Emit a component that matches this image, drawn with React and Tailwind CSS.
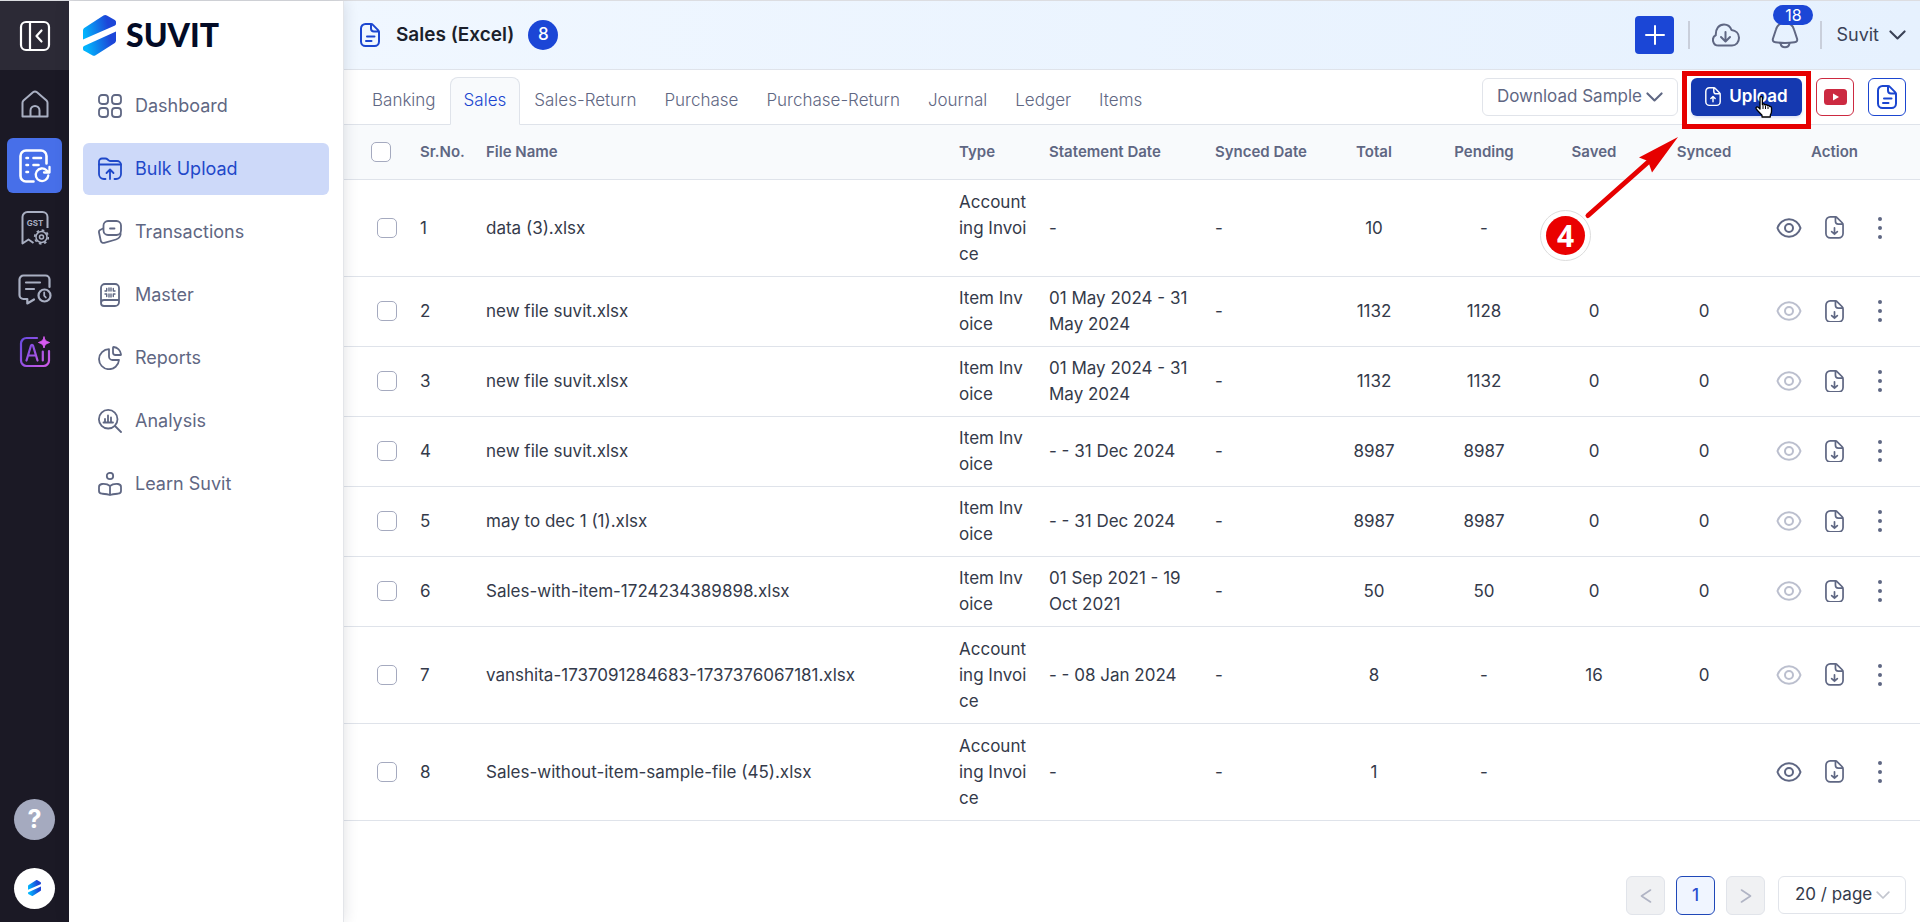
import clsx from "clsx";

const navItems = [
  { label: "Dashboard", icon: DashboardIcon },
  { label: "Bulk Upload", icon: FolderUpIcon, active: true },
  { label: "Transactions", icon: TransactionsIcon },
  { label: "Master", icon: MasterIcon },
  { label: "Reports", icon: ReportsIcon },
  { label: "Analysis", icon: AnalysisIcon },
  { label: "Learn Suvit", icon: LearnIcon },
];

const railItems = [
  { label: "Home", icon: HomeIcon },
  { label: "Data entry", icon: EntryIcon, active: true },
  { label: "GST", icon: GstIcon },
  { label: "Requests", icon: RequestIcon },
  { label: "AI", icon: AiIcon },
];

const tabs = ["Banking", "Sales", "Sales-Return", "Purchase", "Purchase-Return", "Journal", "Ledger", "Items"];

const rows = [
  { name: "data (3).xlsx", type: "Accounting Invoice", date: "-", total: 10, pending: "-", canView: true },
  { name: "new file suvit.xlsx", type: "Item Invoice", date: "01 May 2024 - 31 May 2024", total: 1132, pending: 1128, saved: 0, synced: 0 },
  { name: "new file suvit.xlsx", type: "Item Invoice", date: "01 May 2024 - 31 May 2024", total: 1132, pending: 1132, saved: 0, synced: 0 },
  { name: "new file suvit.xlsx", type: "Item Invoice", date: "- - 31 Dec 2024", total: 8987, pending: 8987, saved: 0, synced: 0 },
  { name: "may to dec 1 (1).xlsx", type: "Item Invoice", date: "- - 31 Dec 2024", total: 8987, pending: 8987, saved: 0, synced: 0 },
  { name: "Sales-with-item-1724234389898.xlsx", type: "Item Invoice", date: "01 Sep 2021 - 19 Oct 2021", total: 50, pending: 50, saved: 0, synced: 0 },
  { name: "vanshita-1737091284683-1737376067181.xlsx", type: "Accounting Invoice", date: "- - 08 Jan 2024", total: 8, pending: "-", saved: 16, synced: 0 },
  { name: "Sales-without-item-sample-file (45).xlsx", type: "Accounting Invoice", date: "-", total: 1, pending: "-", canView: true },
];

function Svg({ w, h, sw = 2, className, children }) {
  return (
    <svg
      width={w}
      height={h}
      viewBox={`0 0 ${w} ${h}`}
      fill="none"
      stroke="currentColor"
      strokeWidth={sw}
      strokeLinecap="round"
      strokeLinejoin="round"
      className={clsx("shrink-0", className)}
      aria-hidden="true"
    >
      {children}
    </svg>
  );
}

function DashboardIcon() {
  return (
    <Svg w={24} h={24} sw={1.8}>
      <rect x="1" y="1" width="9" height="9" rx="3" />
      <rect x="14" y="1" width="9" height="9" rx="3" />
      <rect x="1" y="14" width="9" height="9" rx="3" />
      <rect x="14" y="14" width="9" height="9" rx="3" />
    </Svg>
  );
}

function FolderUpIcon() {
  return (
    <Svg w={24} h={24} sw={1.8}>
      <path d="M7.5 22H6a5 5 0 0 1-5-5V4.5A3 3 0 0 1 4 1.5h3.2c1 0 1.9.4 2.5 1l.8.8c.6.4 1.2.7 2 .7H19a4 4 0 0 1 4 4v9a5 5 0 0 1-5 5h-1.5" />
      <path d="M1 7.5h22" />
      <path d="M12 22v-9M8.5 16l3.5-3.5 3.5 3.5" />
    </Svg>
  );
}

function TransactionsIcon() {
  return (
    <Svg w={24} h={24} sw={1.8}>
      <rect x="5.5" y="1" width="17.5" height="14" rx="4.5" />
      <path d="M12 8.5h4.500" />
      <path d="M5 8.5 2 10c-.8.5-1.2 1.5-1 2.5l1.7 8c.3 1.7 1.8 2.7 3.5 2.3L18 19.500c2.700-.8 4.300-2.500 4.700-5.500" />
    </Svg>
  );
}

function MasterIcon() {
  return (
    <Svg w={24} h={24} sw={1.8}>
      <path d="M3 20V5a4 4 0 0 1 4-4h10a4 4 0 0 1 4 4v14a4 4 0 0 1-4 4H6a3 3 0 0 1 0-6h15" />
      <path d="M11 5v3M13 5v3M11 11v3M13 11v3M7 8h1.7V5.5M17 8h-1.7V5.5M7 11h1.7v2.5M17 11h-1.7v2.5" strokeWidth="1.4" />
    </Svg>
  );
}

function ReportsIcon() {
  return (
    <Svg w={24} h={24} sw={1.8}>
      <path d="M11 3.200A10 10 0 1 0 21 14h-6.500a3.500 3.500 0 0 1-3.500-3.500z" />
      <path d="M15 1.8v4.700A2.500 2.500 0 0 0 17.500 9h5c.3 0 .5-.3.5-.6A8.500 8.500 0 0 0 15.600 1c-.3 0-.6.3-.6.8z" />
    </Svg>
  );
}

function AnalysisIcon() {
  return (
    <Svg w={24} h={24} sw={1.8}>
      <circle cx="10.2" cy="10.2" r="9.3" />
      <path d="m17 17 6 6" />
      <path d="M5.5 13.5H15M7 10v3M10 6.5V13M13 8.500V13" />
    </Svg>
  );
}

function LearnIcon() {
  return (
    <Svg w={24} h={24} sw={1.8}>
      <circle cx="12" cy="4" r="3.2" />
      <path d="M12 14c-2-1.700-5-2.300-8-2-1.800.2-3 1.200-3 3v4c0 1.800 1 2.600 3 2.700 3 .2 5.500.3 8 1.300 2.500-1 5-1.100 8-1.300 2-.1 3-.9 3-2.700v-4c0-1.800-1.200-2.800-3-3-3-.3-6 .3-8 2zM12 14v9" />
    </Svg>
  );
}

function HomeIcon() {
  return (
    <Svg w={28} h={28} sw={2}>
      <path d="M1.5 26.5V12.800c0-.9.4-1.700 1-2.300l9.500-8.200c1.200-1 2.800-1 4 0l9.500 8.200c.6.6 1 1.400 1 2.300v13.700z" />
      <path d="M9.5 26V20.500a4.500 4.500 0 0 1 9 0V26" />
    </Svg>
  );
}

function EntryIcon() {
  return (
    <Svg w={32} h={34} sw={2.6}>
      <path d="M14.5 32.5H7A5.500 5.500 0 0 1 1.500 27V7A5.500 5.500 0 0 1 7 1.500h15A5.500 5.500 0 0 1 27.500 7v7.500" />
      <path d="M7.5 9H9M14.500 9H22M7.500 16H9M14.500 16h5M7.500 23H9" />
      <path d="M29.300 26.500a6.300 6.300 0 1 1-1.800-5.200l2 2M30.500 18v5.500H25" strokeWidth="2.3" />
    </Svg>
  );
}

function GstIcon() {
  return (
    <svg width="28" height="34" viewBox="0 0 28 34" fill="none" stroke="currentColor" strokeWidth="2" strokeLinejoin="round" aria-hidden="true">
      <path d="M12.5 32l-5-3.500-6 4V6a5 5 0 0 1 5-5h15a5 5 0 0 1 5 5v11" />
      <text x="14" y="14.5" textAnchor="middle" fontFamily="Inter" fontSize="8" fontWeight="700" fill="currentColor" stroke="none">
        GST
      </text>
      <circle cx="20.5" cy="26" r="5.5" strokeWidth="1.5" />
      <circle cx="20.5" cy="26" r="6.8" strokeWidth="1.7" strokeDasharray="2.6 2.74" />
      <circle cx="20.5" cy="26" r="2" strokeWidth="1.5" />
    </svg>
  );
}

function RequestIcon() {
  return (
    <Svg w={34} h={32} sw={2.2}>
      <path d="M31.5 13V5.500a4 4 0 0 0-4-4h-22a4 4 0 0 0-4 4V21a4 4 0 0 0 4 4h3.800v4.500L16 25.500" />
      <path d="M8 8.5h14M8 15h8" />
      <circle cx="26.5" cy="21.5" r="6" />
      <path d="M26.2 18.500v3.200l1.600 1.800" strokeWidth="1.8" />
    </Svg>
  );
}

function AiIcon() {
  return (
    <svg width="32" height="32" viewBox="0 0 32 32" fill="none" strokeWidth="2.2" strokeLinecap="round" strokeLinejoin="round" aria-hidden="true">
      <defs>
        <linearGradient id="ai-stroke" gradientUnits="userSpaceOnUse" x1="1" y1="4" x2="31" y2="28">
          <stop stopColor="#6a4be0" />
          <stop offset="1" stopColor="#cf5be8" />
        </linearGradient>
      </defs>
      <g stroke="url(#ai-stroke)">
        <path d="M18 2H7.500A5.500 5.500 0 0 0 2 7.500v17A5.500 5.500 0 0 0 7.500 30h17a5.500 5.500 0 0 0 5.500-5.500V15" />
        <path d="M7.500 24.500 12 9.500c.3-1 1.700-1 2 0l4.500 15M9.500 19.500h7.500M23.800 15.500v9" />
      </g>
      <path d="M25 1c.7 3.300 1.700 4.300 5.500 5.500-3.800 1.200-4.800 2.200-5.500 5.500-.7-3.300-1.700-4.300-5.500-5.500C23.300 5.300 24.300 4.300 25 1z" fill="#d65af0" stroke="#d65af0" strokeWidth="1" />
    </svg>
  );
}

function SuvitMark({ className, id }) {
  return (
    <svg viewBox="0 0 33 41" className={className} aria-hidden="true">
      <defs>
        <linearGradient id={id} gradientUnits="userSpaceOnUse" x1="0" y1="22" x2="33" y2="16">
          <stop offset="0.05" stopColor="#02b4fd" />
          <stop offset="0.8" stopColor="#1c46d8" />
        </linearGradient>
      </defs>
      <path fill={`url(#${id})`} d="M0 24.500V15.500c0-1.200.6-2.200 1.600-2.800L20.500.6c1-.7 2.300-.7 3.400 0l7.500 4.200c1 .5 1.600 1.400 1.600 2.200v2c0 .6-.4 1.200-1 1.500z" />
      <path fill={`url(#${id})`} d="M33 16.500v8.900c0 1.200-.6 2.200-1.600 2.800L12.600 40.300c-1 .7-2.300.7-3.400 0l-7.600-4.200C.6 35.600 0 34.700 0 33.900v-1.400c0-.6.4-1.200 1-1.500z" />
    </svg>
  );
}

const FILE_BODY =
  "M11 1H5.500A4.500 4.500 0 0 0 1 5.500v13A4.500 4.500 0 0 0 5.500 23h9a4.500 4.500 0 0 0 4.500-4.500V9.300c0-.8-.3-1.600-.9-2.200l-5.200-5.200C12.400 1.300 11.800 1 11 1zM11 1v4.500A3 3 0 0 0 14 8.500h5";

function FileTextIcon() {
  return (
    <Svg w={20} h={24} sw={2}>
      <path d={FILE_BODY} />
      <path d="M7 13.5h7.500M6 18h5.500" />
    </Svg>
  );
}

function FileArrow({ up, className }) {
  return (
    <svg viewBox="0 0 20 24" fill="none" stroke="currentColor" strokeWidth="1.8" strokeLinecap="round" strokeLinejoin="round" className={className} aria-hidden="true">
      <path d={FILE_BODY} />
      <path d={up ? "M10 18.500v-6M7.300 14.500 10 12l2.700 2.500" : "M10 12.500V19M7 16.500l3 2.700 3-2.700"} />
    </svg>
  );
}

function ChevronDown({ className, w = 17 }) {
  return (
    <svg width={w} viewBox="0 0 18 11" fill="none" stroke="currentColor" strokeWidth="2.2" strokeLinecap="round" strokeLinejoin="round" className={className} aria-hidden="true">
      <path d="m1.500 1.500 7.500 7.500 7.500-7.500" />
    </svg>
  );
}

function EyeIcon() {
  return (
    <Svg w={26} h={20} sw={2}>
      <path d="M1.500 10C3 5 7.500 1.200 13 1.200S23 5 24.500 10C23 15 18.500 18.800 13 18.800S3 15 1.500 10z" />
      <circle cx="13" cy="10" r="4" />
    </Svg>
  );
}

function Rail() {
  return (
    <div className="w-[69px] shrink-0 flex flex-col items-center bg-[#1b1925] text-[#a9afc2] pb-[13px]">
      <div className="w-full h-[69px] flex items-center justify-center bg-[#2c2a36] text-white">
        <button aria-label="Collapse menu">
          <Svg w={32} h={32} sw={2.2}>
            <rect x="2" y="2" width="28" height="28" rx="5" />
            <path d="M11 2v28M22.500 10.500l-5 5.500 5 5.500" />
          </Svg>
        </button>
      </div>
      <nav className="mt-1.5 flex flex-col gap-[7px]">
        {railItems.map(({ label, icon: Icon, active }) => (
          <button
            key={label}
            aria-label={label}
            className={clsx("size-[55px] rounded-md flex items-center justify-center", active && "bg-[#476fe9] text-white")}
          >
            <Icon />
          </button>
        ))}
      </nav>
      <div className="mt-auto flex flex-col gap-7">
        <button className="size-[41px] rounded-full bg-[#a5aabf] text-white font-bold text-[25px] leading-none" aria-label="Help">
          ?
        </button>
        <button className="size-[41px] rounded-full bg-white flex items-center justify-center" aria-label="Account">
          <SuvitMark id="mark-small" className="w-[13px]" />
        </button>
      </div>
    </div>
  );
}

function Sidebar() {
  return (
    <aside className="relative z-10 w-[275px] shrink-0 bg-white border-r border-[#e3e5e9] shadow-[0_0_14px_rgba(30,35,60,0.14)] px-3.5">
      <div className="h-[68px] flex items-center gap-2.5">
        <SuvitMark id="mark-large" className="w-[33px]" />
        <span className="font-['Lato'] font-black text-[32px] leading-none text-[#030b26]">SUVIT</span>
      </div>
      <nav className="mt-[11px] flex flex-col gap-[11px]">
        {navItems.map(({ label, icon: Icon, active }) => (
          <a
            key={label}
            href="#"
            className={clsx(
              "h-[52px] px-[15px] rounded-md flex items-center gap-[13px] text-lg",
              active ? "bg-[#cdd9f9] text-[#1f48c9]" : "text-[#5f6783]"
            )}
          >
            <Icon />
            {label}
          </a>
        ))}
      </nav>
    </aside>
  );
}

function Header() {
  return (
    <header className="h-[69px] shrink-0 flex items-center justify-between pl-4 pr-3.5 border-b border-[#dfe3ea] bg-linear-to-r from-[#f0f7ff] to-[#e6f1fe]">
      <div className="flex items-center gap-4">
        <span className="text-[#1b46d0]">
          <FileTextIcon />
        </span>
        <h1 className="text-[19px] font-semibold text-[#1b1f2b]">Sales (Excel)</h1>
        <span className="size-[30px] -ml-0.5 rounded-full bg-[#1b46d6] text-white text-[17px] font-medium flex items-center justify-center">8</span>
      </div>
      <div className="flex items-center">
        <button className="w-[39px] h-[38px] rounded-sm bg-[#1b46d6] text-white flex items-center justify-center" aria-label="Add">
          <Svg w={20} h={20} sw={2}>
            <path d="M10 1v18M1 10h18" />
          </Svg>
        </button>
        <span className="w-0.5 h-7 ml-3.5 bg-[#c9cfdb]" />
        <button className="ml-[22px] text-[#5f6783]" aria-label="Downloads">
          <Svg w={28} h={24} sw={2}>
            <path d="M6.500 22.500A5.500 5.500 0 0 1 3.800 12.200C3.500 5.800 7 1.500 12 1.500c3.800 0 6.300 2 7.500 5.500 4.300.5 7.500 3.500 7.500 7.800 0 4.500-3 7.700-7 7.700z" />
            <path d="M13.500 9v9M9 14l4.500 4.500L18 14" />
          </Svg>
        </button>
        <button className="relative ml-[31px] text-[#5f6783]" aria-label="Notifications">
          <Svg w={28} h={28} sw={2}>
            <path d="M14 2C9 2 6 4.500 5 8.500L2 17.500c-.7 2.200.3 3.500 2.500 3.800 6 .9 13 .9 19 0 2.200-.3 3.200-1.600 2.500-3.800L23 8.500C22 4.500 19 2 14 2z" />
            <path d="M9.500 22.500c.5 2.500 2.200 3.800 4.500 3.800s4-1.300 4.500-3.800" />
          </Svg>
          <span className="absolute left-0.5 -top-4 h-5 w-10 rounded-full bg-[#1b46d6] text-white text-base leading-5 text-center">18</span>
        </button>
        <span className="w-0.5 h-7 ml-[21px] bg-[#c9cfdb]" />
        <button className="ml-3.5 flex items-center gap-2.5 text-lg text-[#3a4155]">
          Suvit
          <ChevronDown />
        </button>
      </div>
    </header>
  );
}

function Callout() {
  return (
    <div className="absolute inset-0 z-20 pointer-events-none">
      <div className="absolute -left-[9px] -right-[9px] -top-[7px] -bottom-[13px] border-[5px] border-[#e60000]" />
      <svg width="100" height="86" viewBox="0 0 100 86" className="absolute -left-[108px] top-[58px]" aria-hidden="true">
        <path d="M5 79.500 72 20" stroke="#e60000" strokeWidth="5" strokeLinecap="round" />
        <path d="M95 1 56 21.500 65 25 69 36.500z" fill="#e60000" />
      </svg>
      <span className="absolute -left-[151px] top-[132px] size-[51px] rounded-full border border-[#dcdcdc] bg-white flex items-center justify-center">
        <span className="size-[39px] rounded-full bg-[#ea0000] text-white font-['Noto_Sans',sans-serif] font-bold text-[30px] leading-none flex items-center justify-center">
          4
        </span>
      </span>
      <svg width="18" height="22" viewBox="0 0 18 22" className="absolute left-16 top-[18px]" aria-hidden="true">
        <path
          d="M5 1.500c0-1.300 2.400-1.300 2.400 0v7c.8-.9 2.300-.6 2.500.4.900-.6 2.100-.3 2.400.7 1-.5 2.200 0 2.500 1 .9-.3 1.700.3 1.700 1.300v3.600c0 1.800-.8 2.600-1.200 3.700v1.800H7v-1.800L2.500 14.500c-.8-1-1.900-2-1.400-3 .6-.9 1.800-.6 2.500.1L5 13z"
          fill="#fff"
          stroke="#000"
          strokeWidth="1.3"
          strokeLinejoin="round"
        />
        <path d="M8 9v4M10.500 9.500V13M13 10.500V13" stroke="#000" strokeWidth="1" />
      </svg>
    </div>
  );
}

function Toolbar() {
  return (
    <div className="h-[55px] shrink-0 flex items-end justify-between pl-3.5 pr-3.5 border-b border-[#dfe3ea]">
      <div className="flex -mb-px" role="tablist">
        {tabs.map(tab => (
          <button
            key={tab}
            role="tab"
            aria-selected={tab === "Sales"}
            className={clsx(
              "h-12 px-[13px] border text-[17px] font-light",
              tab === "Sales"
                ? "rounded-t-lg border-[#dfe3ea] border-b-[#f8fafc] bg-[#f8fafc] text-[#1b46d0]"
                : "border-transparent text-[#5f6783]"
            )}
          >
            {tab}
          </button>
        ))}
      </div>
      <div className="flex items-center mb-2">
        <button className="h-[38px] px-3.5 border border-[#e1e4ea] rounded-md flex items-center gap-1 text-[17px] text-[#5f6783]">
          Download Sample
          <ChevronDown />
        </button>
        <div className="relative ml-[13px]">
          <button className="h-[38px] w-[111px] rounded-md bg-[#1539b0] text-white flex items-center justify-center gap-2 text-[17px] font-semibold shadow-[0_2px_3px_rgba(20,60,190,0.15)]">
            <FileArrow up className="w-4" />
            Upload
          </button>
          <Callout />
        </div>
        <button className="ml-3.5 size-[38px] border border-[#cc2a41] rounded-md flex items-center justify-center" aria-label="Watch video">
          <svg width="23" height="16" viewBox="0 0 23 16" aria-hidden="true">
            <rect width="23" height="16" rx="3.5" fill="#cc2a41" />
            <path d="M9 4.500v7l6-3.500z" fill="#fff" />
          </svg>
        </button>
        <button className="ml-3.5 size-[38px] border border-[#1b46d0] rounded-md text-[#1b46d0] flex items-center justify-center" aria-label="Guide">
          <FileTextIcon />
        </button>
      </div>
    </div>
  );
}

function Checkbox({ label }) {
  return (
    <input
      type="checkbox"
      aria-label={label}
      className="block appearance-none size-5 rounded-[5px] border border-[#a5aabf] bg-white"
    />
  );
}

function FilesTable() {
  return (
    <table className="w-full table-fixed text-left text-[17px] leading-[26px] text-[#343a4a]">
      <colgroup>
        <col className="w-[66px]" />
        <col className="w-[66px]" />
        <col />
        <col className="w-[90px]" />
        <col className="w-[166px]" />
        <col className="w-[114px]" />
        <col className="w-[110px]" />
        <col className="w-[110px]" />
        <col className="w-[110px]" />
        <col className="w-[110px]" />
        <col className="w-[161px]" />
      </colgroup>
      <thead>
        <tr className="h-[54px] bg-[#f8fafc] border-b border-[#dfe3ea] text-[15px] text-[#5f6783] [&>th]:font-semibold [&>th]:px-2.5">
          <th>
            <div className="pl-[17px]">
              <Checkbox label="Select all" />
            </div>
          </th>
          <th className="whitespace-nowrap">Sr.No.</th>
          <th>File Name</th>
          <th>Type</th>
          <th>Statement Date</th>
          <th>Synced Date</th>
          <th className="text-center">Total</th>
          <th className="text-center">Pending</th>
          <th className="text-center">Saved</th>
          <th className="text-center">Synced</th>
          <th>
            <div className="pr-2.5 text-center">Action</div>
          </th>
        </tr>
      </thead>
      <tbody>
        {rows.map((row, i) => (
          <tr
            key={i}
            className={clsx(
              "border-b border-[#dfe3ea] [&>td]:px-2.5 [&>td]:py-2",
              row.type === "Item Invoice" ? "h-[70px]" : "h-[97px]"
            )}
          >
            <td>
              <div className="pl-[23px]">
                <Checkbox label={`Select ${row.name}`} />
              </div>
            </td>
            <td>{i + 1}</td>
            <td>{row.name}</td>
            <td className="break-all">{row.type}</td>
            <td>{row.date}</td>
            <td>-</td>
            <td className="text-center">{row.total}</td>
            <td className="text-center">{row.pending}</td>
            <td className="text-center">{row.saved}</td>
            <td className="text-center">{row.synced}</td>
            <td>
              <div className="flex items-center pl-[7px] text-[#5f6783]">
                <button aria-label="View" disabled={!row.canView} className="disabled:text-[#bbbfce]">
                  <EyeIcon />
                </button>
                <button aria-label="Download" className="ml-[23px]">
                  <FileArrow className="w-[19px]" />
                </button>
                <button aria-label="More" className="ml-[33px]">
                  <svg width="6" height="24" viewBox="0 0 6 24" fill="currentColor" aria-hidden="true">
                    <circle cx="3" cy="3" r="2" />
                    <circle cx="3" cy="12" r="2" />
                    <circle cx="3" cy="21" r="2" />
                  </svg>
                </button>
              </div>
            </td>
          </tr>
        ))}
      </tbody>
    </table>
  );
}

function Pagination() {
  return (
    <div className="mt-auto flex justify-end gap-[11px] pr-3.5 pb-[7px] text-[17px]">
      <button disabled className="size-[39px] rounded-md border border-[#e1e4ea] bg-[#f0f1f3] text-[#b0b4c4] flex items-center justify-center" aria-label="Previous page">
        <Svg w={12} h={14} sw={1.6}>
          <path d="M10.500 1 1.500 7l9 6" />
        </Svg>
      </button>
      <button className="size-[39px] rounded-md border border-[#1f48b8] bg-[#f0f5ff] text-[#2b4fd0] font-medium">1</button>
      <button disabled className="size-[39px] rounded-md border border-[#e1e4ea] bg-[#f0f1f3] text-[#b0b4c4] flex items-center justify-center" aria-label="Next page">
        <Svg w={12} h={14} sw={1.6}>
          <path d="m1.500 1 9 6-9 6" />
        </Svg>
      </button>
      <div className="relative ml-0.5">
        <select aria-label="Page size" className="appearance-none h-[38px] w-32 pl-4 border border-[#e1e4ea] rounded-md bg-white text-[#343a4a]">
          <option>20 / page</option>
        </select>
        <ChevronDown w={14} className="absolute right-4 top-[15px] text-[#c3c6cf] pointer-events-none" />
      </div>
    </div>
  );
}

export default function App() {
  return (
    <div className="min-h-screen flex border-t border-[#dcdde1] bg-white font-['Inter',sans-serif]">
      <Rail />
      <Sidebar />
      <main className="flex-1 min-w-0 flex flex-col">
        <Header />
        <Toolbar />
        <FilesTable />
        <Pagination />
      </main>
    </div>
  );
}
